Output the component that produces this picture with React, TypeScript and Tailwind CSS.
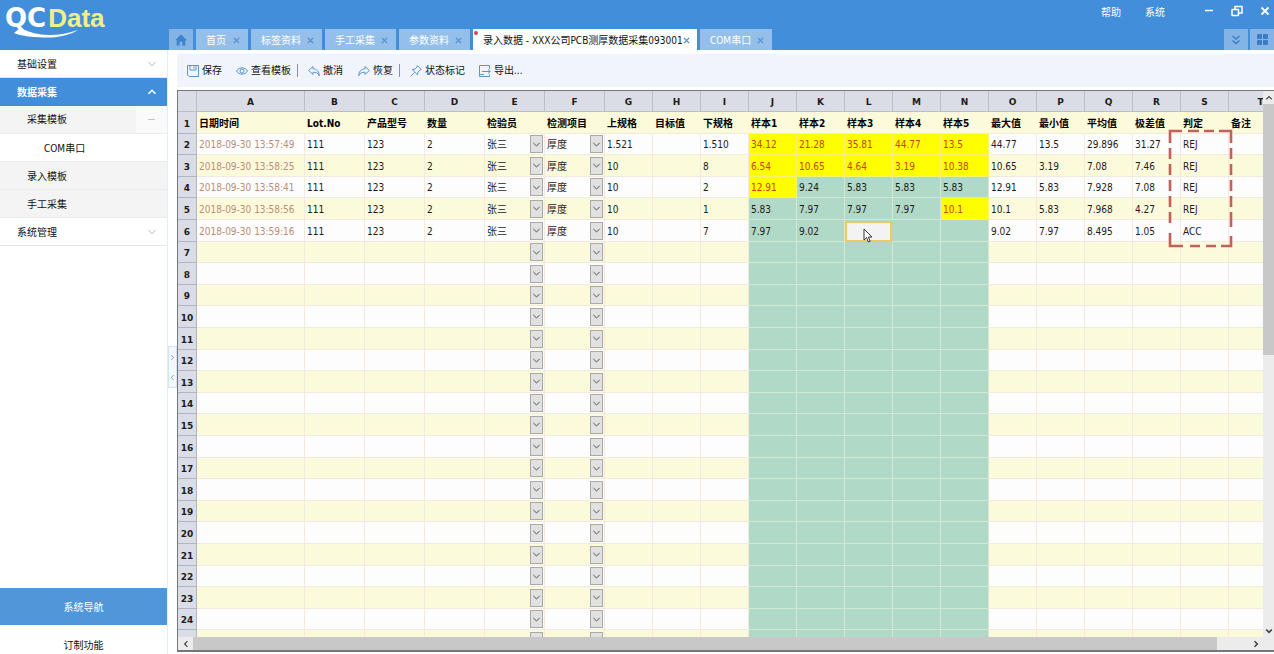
import React from 'react';
import clsx from 'clsx';

type Sample = { value: string; out?: boolean };

interface Entry {
  time: string;
  upper: string;
  lower: string;
  samples: Sample[];
  stats: string[];
  verdict: string;
}

const columns = [
  { key: 'A', title: '日期时间', width: 'w-[108px]' },
  { key: 'B', title: 'Lot.No', width: 'w-[60px]' },
  { key: 'C', title: '产品型号', width: 'w-[60px]' },
  { key: 'D', title: '数量', width: 'w-[60px]' },
  { key: 'E', title: '检验员', width: 'w-[60px]' },
  { key: 'F', title: '检测项目', width: 'w-[60px]' },
  { key: 'G', title: '上规格', width: 'w-[48px]' },
  { key: 'H', title: '目标值', width: 'w-[48px]' },
  { key: 'I', title: '下规格', width: 'w-[48px]' },
  { key: 'J', title: '样本1', width: 'w-[48px]' },
  { key: 'K', title: '样本2', width: 'w-[48px]' },
  { key: 'L', title: '样本3', width: 'w-[48px]' },
  { key: 'M', title: '样本4', width: 'w-[48px]' },
  { key: 'N', title: '样本5', width: 'w-[48px]' },
  { key: 'O', title: '最大值', width: 'w-[48px]' },
  { key: 'P', title: '最小值', width: 'w-[48px]' },
  { key: 'Q', title: '平均值', width: 'w-[48px]' },
  { key: 'R', title: '极差值', width: 'w-[48px]' },
  { key: 'S', title: '判定', width: 'w-[48px]' },
  { key: 'T', title: '备注', width: 'w-[64px]' },
];

const ok = (value: string): Sample => ({ value });
const out = (value: string): Sample => ({ value, out: true });

const entries: Entry[] = [
  {
    time: '2018-09-30 13:57:49',
    upper: '1.521',
    lower: '1.510',
    samples: [out('34.12'), out('21.28'), out('35.81'), out('44.77'), out('13.5')],
    stats: ['44.77', '13.5', '29.896', '31.27'],
    verdict: 'REJ',
  },
  {
    time: '2018-09-30 13:58:25',
    upper: '10',
    lower: '8',
    samples: [out('6.54'), out('10.65'), out('4.64'), out('3.19'), out('10.38')],
    stats: ['10.65', '3.19', '7.08', '7.46'],
    verdict: 'REJ',
  },
  {
    time: '2018-09-30 13:58:41',
    upper: '10',
    lower: '2',
    samples: [out('12.91'), ok('9.24'), ok('5.83'), ok('5.83'), ok('5.83')],
    stats: ['12.91', '5.83', '7.928', '7.08'],
    verdict: 'REJ',
  },
  {
    time: '2018-09-30 13:58:56',
    upper: '10',
    lower: '1',
    samples: [ok('5.83'), ok('7.97'), ok('7.97'), ok('7.97'), out('10.1')],
    stats: ['10.1', '5.83', '7.968', '4.27'],
    verdict: 'REJ',
  },
  {
    time: '2018-09-30 13:59:16',
    upper: '10',
    lower: '7',
    samples: [ok('7.97'), ok('9.02'), ok(''), ok(''), ok('')],
    stats: ['9.02', '7.97', '8.495', '1.05'],
    verdict: 'ACC',
  },
];

// Numbered rows, plus one spare row below them
const NUMBERED_ROWS = 24;

// Row and column of the cell being edited
const ACTIVE_ROW = 6;
const ACTIVE_COL = 'L';

const Chevron = ({ d, className }: { d: string; className?: string }) => (
  <svg viewBox="0 0 10 10" className={clsx('shrink-0', className)} fill="none" stroke="currentColor" aria-hidden="true">
    <path d={d} />
  </svg>
);

const DOWN = 'M1.5 3.2 L5 6.7 L8.5 3.2';
const UP = 'M1.5 6.8 L5 3.3 L8.5 6.8';
const LEFT = 'M6.8 1.5 L3.3 5 L6.8 8.5';
const RIGHT = 'M3.2 1.5 L6.7 5 L3.2 8.5';

/* ---------- Header ---------- */

const Logo = () => (
  <a href="#" className="relative flex h-[50px] w-[167px] shrink-0 gap-[2px] pl-[5px] pt-[2px] text-[26px] font-bold leading-[32px]">
    <span className="font-['DejaVu_Sans',sans-serif] text-white">QC</span>
    <span className="font-['Liberation_Sans',sans-serif] text-[#f0f08a]">Data</span>
    <svg viewBox="0 0 66 12" className="absolute left-[13px] top-[27px] h-[12px] w-[66px]" aria-hidden="true">
      <path d="M1 6 L7 1 C12 3 18 6 28 7.500 C40 9 54 7 65 3 C55 9 43 11 31 10.500 C18 10 8 9 1 6 Z" fill="#fff" />
    </svg>
  </a>
);

const Tab = ({ title, width, active }: { title: string; width: string; active?: boolean }) => (
  <div
    className={clsx(
      'relative flex items-center justify-between pl-[10px] pr-[8px] pt-px',
      width,
      active ? 'bg-[#fdfeff] text-[#111]' : 'bg-[#94bfea] text-white',
    )}
  >
    {active && <span className="absolute left-[1px] top-[2px] h-[4px] w-[4px] rounded-full bg-[#d2455a]" />}
    <button type="button" className="whitespace-nowrap">{title}</button>
    <button type="button" aria-label={`关闭 ${title}`} className="text-[#5390d0]">
      <svg viewBox="0 0 8 8" className="h-[7px] w-[7px]" stroke="currentColor" strokeWidth="1.600" aria-hidden="true">
        <path d="M1 1 L7 7 M7 1 L1 7" />
      </svg>
    </button>
  </div>
);

const Header = () => (
  <header className="flex h-[50px] shrink-0 bg-[#438edb]">
    <Logo />
    <div className="flex min-w-0 flex-1 flex-col pl-[2px]">
      <div className="flex h-[29px] items-start justify-end pr-[4px] pt-[4px] leading-[16px] text-white">
        <button type="button" className="mr-[24px] pt-px">帮助</button>
        <button type="button" className="mr-[39px] pt-px">系统</button>
        <button type="button" aria-label="最小化" className="mr-[17px] flex h-[13px] items-center">
          <svg viewBox="0 0 10 10" className="h-[10px] w-[10px]" stroke="currentColor" strokeWidth="1.500"><path d="M1 4.500 H9" /></svg>
        </button>
        <button type="button" aria-label="还原" className="mr-[17px] flex h-[13px] items-center">
          <svg viewBox="0 0 12 12" className="h-[12px] w-[12px]" fill="none" stroke="currentColor" strokeWidth="1.500">
            <rect x="1" y="4.500" width="6.500" height="6" rx="0.500" />
            <path d="M4 4 V1.500 H11 V8 H8" />
          </svg>
        </button>
        <button type="button" aria-label="关闭" className="flex h-[13px] items-center">
          <svg viewBox="0 0 10 10" className="h-[10px] w-[10px]" stroke="currentColor" strokeWidth="1.800"><path d="M1.500 1.500 L8.500 8.500 M8.500 1.500 L1.500 8.500" /></svg>
        </button>
      </div>
      <nav className="flex h-[21px] gap-[3px]">
        <button type="button" aria-label="主页" className="flex w-[24px] items-center justify-center bg-[#84b4e6]">
          <svg viewBox="0 0 12 12" className="h-[12px] w-[12px]" fill="#3b82cf" aria-hidden="true">
            <path d="M6 0.500 L12 6.300 H10.300 V11.500 H7.400 V7.800 H4.600 V11.500 H1.700 V6.300 H0 Z" />
          </svg>
        </button>
        <Tab title="首页" width="w-[52px]" />
        <Tab title="标签资料" width="w-[71px]" />
        <Tab title="手工采集" width="w-[71px]" />
        <Tab title="参数资料" width="w-[71px]" />
        <Tab title="录入数据 - XXX公司PCB测厚数据采集093001" width="w-[224px]" active />
        <Tab title="COM串口" width="w-[72px]" />
        <div className="ml-auto flex gap-[2px]">
          <button type="button" aria-label="更多标签" className="flex w-[24px] items-center justify-center bg-[#84b4e6] text-[#3b7cc4]">
            <svg viewBox="0 0 10 10" className="h-[10px] w-[10px]" fill="none" stroke="currentColor" strokeWidth="1.500" aria-hidden="true">
              <path d="M1.500 1 L5 4 L8.500 1 M1.500 5.500 L5 8.500 L8.500 5.500" />
            </svg>
          </button>
          <button type="button" aria-label="窗口排列" className="flex w-[24px] items-center justify-center bg-[#84b4e6] text-[#3b7cc4]">
            <svg viewBox="0 0 11 11" className="h-[11px] w-[11px]" fill="currentColor" aria-hidden="true">
              <rect width="5" height="5" rx="1" />
              <rect x="6" width="5" height="5" rx="1" />
              <rect y="6" width="5" height="5" rx="1" />
              <rect x="6" y="6" width="5" height="5" rx="1" />
            </svg>
          </button>
        </div>
      </nav>
    </div>
  </header>
);

/* ---------- Sidebar ---------- */

const Sidebar = () => (
  <aside className="flex w-[168px] shrink-0 flex-col border-r border-[#e4ecf5] bg-white text-[#111]">
    <nav className="flex flex-1 flex-col">
      <button type="button" className="flex h-[28px] items-center justify-between border-b border-[#e6e6e6] pl-[17px] pr-[10px] pt-px">
        基础设置
        <Chevron d={DOWN} className="h-[10px] w-[10px] text-[#b8b8b8]" />
      </button>
      <button type="button" className="flex h-[28px] items-center justify-between bg-[#438edb] pl-[17px] pr-[10px] font-bold text-white">
        数据采集
        <Chevron d={UP} className="h-[10px] w-[10px] stroke-[1.5]" />
      </button>
      <button type="button" className="flex h-[28px] items-center justify-between border-b border-[#ebebeb] bg-[#f4f4f4] pl-[27px]">
        采集模板
        <span className="flex h-full w-[31px] items-center justify-center bg-[#fafafa]">
          <span className="h-px w-[7px] bg-[#c4c4c4]" />
        </span>
      </button>
      <a href="#" className="flex h-[28px] items-center border-b border-[#ebebeb] pl-[44px] pt-px">COM串口</a>
      <a href="#" className="flex h-[28px] items-center border-b border-[#ebebeb] bg-[#f4f4f4] pl-[27px] pt-px">录入模板</a>
      <a href="#" className="flex h-[28px] items-center border-b border-[#ebebeb] bg-[#f4f4f4] pl-[27px] pt-px">手工采集</a>
      <button type="button" className="flex h-[28px] items-center justify-between border-b border-[#e6e6e6] pl-[17px] pr-[10px] pt-px">
        系统管理
        <Chevron d={DOWN} className="h-[10px] w-[10px] text-[#b8b8b8]" />
      </button>
    </nav>
    <button type="button" className="h-[37px] bg-[#5096d8] pt-px text-white">系统导航</button>
    <button type="button" className="h-[29px] pt-[12px] leading-[16px]">订制功能</button>
  </aside>
);

/* ---------- Toolbar ---------- */

const ToolButton = ({ label, children }: { label: string; children: React.ReactNode }) => (
  <button type="button" className="flex items-center gap-[3px] whitespace-nowrap">
    <svg viewBox="0 0 12 12" className="h-[12px] w-[12px]" fill="none" stroke="#5b95cb" aria-hidden="true">
      {children}
    </svg>
    {label}
  </button>
);

const Divider = () => <span className="ml-[6px] mr-[10px] h-[13px] w-px bg-[#8f949c]" />;

const Toolbar = () => (
  <div className="mt-[4px] flex h-[33px] shrink-0 items-center bg-[#f1f4fa] pl-[10px] text-[#111]">
    <div className="flex gap-[14px]">
      <ToolButton label="保存">
        <path d="M0.500 0.500 H11.500 V11.500 H2 L0.500 10 Z M3 0.500 V5 H9 V0.500 M7 1.500 V3.500" />
      </ToolButton>
      <ToolButton label="查看模板">
        <path d="M0.500 6 C3 1.800 9 1.800 11.500 6 C9 10.200 3 10.200 0.500 6 Z" />
        <circle cx="6" cy="6" r="2" />
      </ToolButton>
    </div>
    <Divider />
    <div className="flex gap-[15px]">
      <ToolButton label="撤消">
        <path d="M5 1.500 L0.600 5.500 L5 9.500 V7.300 C8 7 10 8 11.300 10.800 C11.500 7 9 4 5 3.800 Z" />
      </ToolButton>
      <ToolButton label="恢复">
        <path d="M7 1.500 L11.400 5.500 L7 9.500 V7.300 C4 7 2 8 0.700 10.800 C0.500 7 3 4 7 3.800 Z" />
      </ToolButton>
    </div>
    <Divider />
    <div className="flex gap-[14px]">
      <ToolButton label="状态标记">
        <path d="M7.500 0.700 L11.300 4.500 L10 5 L8 7 L7.500 9.800 L2.200 4.500 L5 4 L7 2 Z M4.700 7.300 L0.700 11.300" />
      </ToolButton>
      <ToolButton label="导出...">
        <path d="M10.500 4 V0.500 H0.500 V11.500 H10.500 V9.500 M3 6.500 H11.300 M9 4.500 L11.300 6.500 L9 8.500 M0.500 9.500 H5" />
      </ToolButton>
    </div>
  </div>
);

/* ---------- Sheet ---------- */

const CellSelect = ({ label, value }: { label: string; value?: string }) => (
  <div className="flex items-center pr-px">
    <select aria-label={label} defaultValue={value ?? ''} className="h-[18px] min-w-0 flex-1 appearance-none bg-transparent pt-[2px]">
      <option value={value ?? ''}>{value ?? ''}</option>
    </select>
    <span className="flex h-[18px] w-[13px] shrink-0 items-center justify-center border border-[#a9a9a9] bg-[#e1e1e1] text-[#444]">
      <Chevron d={DOWN} className="h-[9px] w-[9px]" />
    </span>
  </div>
);

const cellText = (entry: Entry, key: string): string => {
  switch (key) {
    case 'A': return entry.time;
    case 'B': return '111';
    case 'C': return '123';
    case 'D': return '2';
    case 'G': return entry.upper;
    case 'I': return entry.lower;
    case 'S': return entry.verdict;
  }
  if (key >= 'J' && key <= 'N') return entry.samples['JKLMN'.indexOf(key)].value;
  if (key >= 'O' && key <= 'R') return entry.stats['OPQR'.indexOf(key)];
  return '';
};

const Cell = ({ row, col, entry }: { row: number; col: string; entry?: Entry }) => {
  const isSample = col >= 'J' && col <= 'N';
  const isSelect = col === 'E' || col === 'F';
  const isOut = isSample && entry?.samples['JKLMN'.indexOf(col)].out;

  if (row === ACTIVE_ROW && col === ACTIVE_COL) {
    return (
      <td className="bg-[#b0d9c7] p-0">
        <input aria-label={`${col}${row}`} className="block h-[21px] w-[47px] border-2 border-[#f0c860] bg-[#f3f3f3] px-px" />
      </td>
    );
  }

  return (
    <td
      className={clsx(
        'overflow-hidden border-b border-r p-0 pl-[2px]',
        !isSelect && 'pt-[2px]',
        isOut && 'border-[#f4f470] bg-[#ffff00] text-[#c8420a]',
        isSample && !isOut && 'border-[#d3e9d3] bg-[#b0d9c7]',
        !isSample && 'border-[#f3eadf]',
        col === 'A' && 'text-[#bb8d78]',
      )}
    >
      {col === 'E' && <CellSelect label={`检验员 ${row}`} value={entry && '张三'} />}
      {col === 'F' && <CellSelect label={`检测项目 ${row}`} value={entry && '厚度'} />}
      {entry && cellText(entry, col)}
    </td>
  );
};

const Sheet = () => (
  <table className="w-[1115px] table-fixed border-separate border-spacing-0 whitespace-nowrap text-left leading-[16px] text-[#1c1c1c]">
    <colgroup>
      <col className="w-[19px]" />
      {columns.map((c) => <col key={c.key} className={c.width} />)}
    </colgroup>
    <thead className="font-['DejaVu_Sans',sans-serif] text-[9px]">
      <tr className="h-[21px] bg-[#dadde5]">
        <th className="border-b border-r border-[#b9bdc6] p-0" />
        {columns.map((c) => (
          <th key={c.key} className="border-b border-r border-[#b9bdc6] p-0 pt-[2px] text-center font-bold">{c.key}</th>
        ))}
      </tr>
    </thead>
    <tbody>
      {Array.from({ length: NUMBERED_ROWS + 1 }, (_, i) => {
        const row = i + 1;
        return (
          <tr key={row} className={clsx((i % 5) % 2 === 0 ? 'h-[22px]' : 'h-[21px]', row % 2 === 1 ? 'bg-[#fbfbdc]' : 'bg-[#fdfdfd]')}>
            <th className="border-b border-r border-[#b0b5bf] bg-[#dadde5] p-0 pt-[2px] text-center font-['DejaVu_Sans',sans-serif] text-[9px] font-bold">
              {row <= NUMBERED_ROWS && row}
            </th>
            {columns.map((c) =>
              row === 1 ? (
                <th key={c.key} className="border-b border-[#f3eadf] p-0 pl-[2px] pt-[2px] font-bold text-black">{c.title}</th>
              ) : (
                <Cell key={c.key} row={row} col={c.key} entry={entries[row - 2]} />
              ),
            )}
          </tr>
        );
      })}
    </tbody>
  </table>
);

const SheetPane = () => (
  <section className="flex min-h-0 flex-1 flex-col border-b-2 border-l border-t border-[#74777d]">
    <div className="flex min-h-0 flex-1">
      <div className="relative min-w-0 flex-1 overflow-hidden">
        <Sheet />
        {/* Highlight around the verdict column */}
        <svg viewBox="0 0 66 119" className="absolute left-[990px] top-[38px] h-[119px] w-[66px]" fill="none" stroke="#c4605a" strokeWidth="2.600" aria-hidden="true">
          <path d="M2 14 V2 H14 M20 2 H31 M36 2 H46 M51 2 H63 V14" />
          <path d="M2 19 V30 M2 35 V46 M2 51 V62 M2 67 V78 M2 83 V94 M2 104 V117 H15 M22 117 H32 M38 117 H48 M53 117 H63 V107" />
          <path d="M63 19 V30 M63 35 V46 M63 51 V62 M63 67 V78 M63 83 V98" />
        </svg>
        <svg viewBox="0 0 10 15" className="absolute left-[685px] top-[137px] h-[15px] w-[10px]" aria-hidden="true">
          <path d="M1 1 V12 L3.600 9.600 L5.400 14 L7.200 13.200 L5.400 9 H9 Z" fill="#fff" stroke="#222" strokeWidth="0.900" />
        </svg>
      </div>
      <div className="flex w-[11px] flex-col items-center bg-[#ececec] text-[#444]">
        <button type="button" aria-label="向上滚动" className="flex h-[13px] items-center"><Chevron d={UP} className="h-[8px] w-[8px] stroke-[1.5]" /></button>
        <div className="h-[46%] w-full bg-[#c8c8c8]" />
        <button type="button" aria-label="向下滚动" className="mt-auto flex h-[13px] items-center"><Chevron d={DOWN} className="h-[8px] w-[8px] stroke-2" /></button>
      </div>
    </div>
    <div className="flex h-[13px] shrink-0 items-center bg-[#ececec] pr-[11px] text-[#444]">
      <button type="button" aria-label="向左滚动" className="flex w-[15px] justify-center"><Chevron d={LEFT} className="h-[8px] w-[8px] stroke-[1.5]" /></button>
      <div className="h-full flex-1">
        <div className="h-full w-[97%] bg-[#c8c8c8]" />
      </div>
      <button type="button" aria-label="向右滚动" className="flex w-[14px] justify-center"><Chevron d={RIGHT} className="h-[8px] w-[8px] stroke-2" /></button>
    </div>
  </section>
);

const App = () => (
  <div className="flex h-screen flex-col overflow-hidden bg-white font-['DejaVu_Sans_Condensed','Noto_Sans_CJK_SC',sans-serif] text-[10px]">
    <Header />
    <div className="flex min-h-0 flex-1">
      <Sidebar />
      <div className="flex w-[9px] shrink-0 flex-col justify-center pt-[30px]">
        <div className="flex h-[42px] flex-col items-center justify-around border border-[#d5e3f0] bg-[#f3f8fd] text-[#5f7288]">
          <button type="button" aria-label="展开" className="flex"><Chevron d={RIGHT} className="h-[7px] w-[7px]" /></button>
          <button type="button" aria-label="收起" className="flex"><Chevron d={LEFT} className="h-[7px] w-[7px]" /></button>
        </div>
      </div>
      <main className="flex min-w-0 flex-1 flex-col">
        <Toolbar />
        <div className="flex min-h-0 flex-1 flex-col pb-[2px] pt-[3px]">
          <SheetPane />
        </div>
      </main>
    </div>
  </div>
);

export default App;
